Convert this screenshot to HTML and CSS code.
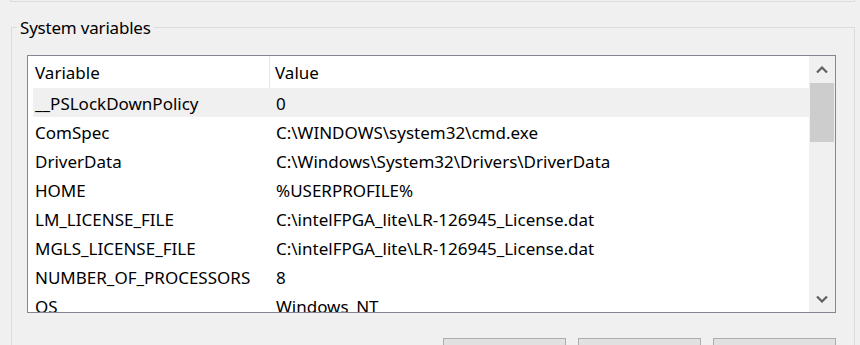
FILE: index.html
```html
<!DOCTYPE html>
<html lang="en">

<head>
    <meta charset="UTF-8">
    <meta name="viewport" content="width=device-width, initial-scale=1.0">
    <title>Environment Variables</title>
    <link rel="stylesheet" href="styles.css">
</head>

<body>
    <div class="top-panel"></div>

    <div class="group">
        <div class="group-title">System variables</div>

        <div class="list">
            <div class="list-body">
                <div class="list-head">
                    <div class="head-name">Variable</div>
                    <div class="head-value">Value</div>
                </div>
                <div class="row selected"><span class="cell-name">__PSLockDownPolicy</span><span>0</span></div>
                <div class="row"><span class="cell-name">ComSpec</span><span>C:\WINDOWS\system32\cmd.exe</span></div>
                <div class="row"><span class="cell-name">DriverData</span><span>C:\Windows\System32\Drivers\DriverData</span></div>
                <div class="row"><span class="cell-name">HOME</span><span>%USERPROFILE%</span></div>
                <div class="row"><span class="cell-name">LM_LICENSE_FILE</span><span>C:\intelFPGA_lite\LR-126945_License.dat</span></div>
                <div class="row"><span class="cell-name">MGLS_LICENSE_FILE</span><span>C:\intelFPGA_lite\LR-126945_License.dat</span></div>
                <div class="row"><span class="cell-name">NUMBER_OF_PROCESSORS</span><span>8</span></div>
                <div class="row"><span class="cell-name">OS</span><span>Windows_NT</span></div>
            </div>

            <div class="scrollbar">
                <div class="scroll-arrow">
                    <svg width="12" height="7" viewBox="0 0 12 7"><path d="M1 6.5 L6 1.5 L11 6.5" fill="none" stroke="#606060" stroke-width="2.2"/></svg>
                </div>
                <div class="scroll-track">
                    <div class="scroll-thumb"></div>
                </div>
                <div class="scroll-arrow">
                    <svg width="12" height="7" viewBox="0 0 12 7"><path d="M1 0.5 L6 5.5 L11 0.5" fill="none" stroke="#606060" stroke-width="2.2"/></svg>
                </div>
            </div>
        </div>

        <div class="buttons">
            <button class="btn">New...</button>
            <button class="btn">Edit...</button>
            <button class="btn">Delete</button>
        </div>
    </div>
</body>

</html>
```

FILE: styles.css
```css
html,
body {
    overflow: hidden;
}

body {
    margin: 0;
    background: #f0f0f0;
    color: #000;
    font-family: 'Noto Sans', 'Open Sans', sans-serif;
    font-size: 17px;
}

.top-panel {
    margin-left: 10px;
    width: 843px;
    height: 1px;
    border: 1px solid #dcdcdc;
    border-top: none;
}

.group {
    margin: 25px 5px 0 11px;
    padding: 0 18px 0 15px;
    border: 1px solid #dcdcdc;
    height: 400px;
}

.group-title {
    width: fit-content;
    margin: -10px 0 0 -10px;
    padding: 0 3px;
    line-height: 20px;
    letter-spacing: -0.2px;
    background: #f0f0f0;
}

.list {
    display: flex;
    margin-top: 17px;
    height: 256px;
    border: 1px solid #828790;
    background: #fff;
}

.list-body {
    flex: 1;
    overflow: hidden;
}

.list-head {
    display: flex;
    height: 32px;
    line-height: 30px;
}

.head-name {
    width: 242px;
    padding: 2px 0 0 7px;
    box-sizing: border-box;
    border-right: 1px solid #e5e5e5;
}

.head-value {
    padding: 2px 0 0 5px;
}

.row {
    display: grid;
    grid-template-columns: 243px 1fr;
    margin-left: 5px;
    height: 29px;
    padding-top: 2px;
    line-height: 27px;
    box-sizing: border-box;
    white-space: nowrap;
}

.row.selected {
    background: #f0f0f0;
}

.cell-name {
    padding-left: 2px;
}

.scrollbar {
    display: flex;
    flex-direction: column;
    width: 26px;
    background: #f0f0f0;
}

.scroll-arrow {
    display: flex;
    align-items: center;
    justify-content: center;
    height: 26px;
}

.scroll-track {
    flex: 1;
    padding: 1px 1px 0;
}

.scroll-thumb {
    height: 59px;
    background: #cdcdcd;
}

.buttons {
    display: flex;
    justify-content: flex-end;
    gap: 12px;
    margin-top: 25px;
}

.btn {
    width: 123px;
    height: 34px;
    border: 1px solid #adadad;
    background: #e1e1e1;
    font: inherit;
    line-height: 1;
    color: #000;
}
```
